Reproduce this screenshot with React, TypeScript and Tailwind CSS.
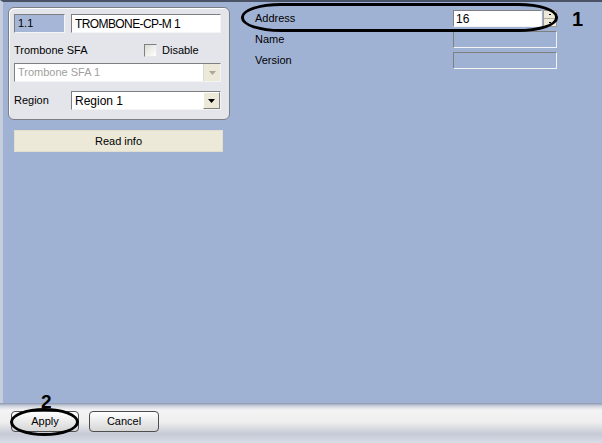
import React from 'react';

const font = { fontFamily: '"Liberation Sans", Arial, sans-serif' };

function Sunken({ className = '', children }: { className?: string; children?: React.ReactNode }) {
  return (
    <div
      className={`flex items-center border border-t-[#7f7f7f] border-l-[#7f7f7f] border-b-[#f4f4f4] border-r-[#f4f4f4] ${className}`}
    >
      {children}
    </div>
  );
}

function Arrow({ disabled }: { disabled?: boolean }) {
  return (
    <div className="flex h-full w-[17px] items-center justify-center border-l border-[#d8d8d8] bg-[#ece9d8]">
      <svg width="7" height="4" viewBox="0 0 7 4">
        <polygon points="0,0 7,0 3.5,4" fill={disabled ? '#aca899' : '#000'} />
      </svg>
    </div>
  );
}

function Ellipse({ className }: { className: string }) {
  return <div className={`pointer-events-none absolute border-[3px] border-black ${className}`} />;
}

function FieldRow({ label, children }: { label: string; children: React.ReactNode }) {
  return (
    <div className="flex h-[21px] items-center">
      <span className="w-[198px] text-[11px] text-black">{label}</span>
      {children}
    </div>
  );
}

export default function App() {
  return (
    <div className="relative flex h-[443px] w-[602px] flex-col overflow-hidden bg-[#a0b2d4]" style={font}>
      {/* Main area */}
      <div className="flex flex-1 border-t-2 border-l-[3px] border-t-[#4a5266] border-l-[#c6cedd] pt-[5px] pl-[5px]">
        {/* Left column */}
        <div className="flex w-[222px] flex-col">
          <div className="flex h-[113px] flex-col rounded-[6px] border border-[#7d7d84] bg-[#e4e5ea] pt-[6px] pl-[5px] shadow-[inset_1px_1px_0_#ffffff]">
            <div className="flex h-[19px] gap-[6px]">
              <Sunken className="w-[51px] bg-[#a6b6d6] pl-[3px] text-[11px] text-black">1.1</Sunken>
              <Sunken className="w-[150px] bg-white pl-[3px] text-[12px] tracking-[-0.6px] text-black">
                TROMBONE-CP-M 1
              </Sunken>
            </div>
            <div className="mt-[11px] flex h-[13px] items-center">
              <span className="w-[130px] text-[11px] text-black">Trombone SFA</span>
              <div className="h-[13px] w-[13px] border border-t-[#808080] border-l-[#808080] border-b-[#e8e8e8] border-r-[#e8e8e8] bg-gradient-to-br from-[#dcdcd6] to-white" />
              <span className="ml-[5px] text-[11px] text-black">Disable</span>
            </div>
            <Sunken className="mt-[6px] h-[19px] w-[207px] bg-white text-[11px] text-[#a0a0a0]">
              <span className="flex-1 pl-[3px]">Trombone SFA 1</span>
              <Arrow disabled />
            </Sunken>
            <div className="mt-[9px] flex h-[19px] items-center">
              <span className="w-[57px] text-[11px] text-black">Region</span>
              <Sunken className="h-[19px] w-[150px] bg-white text-[12px] text-black">
                <span className="flex-1 pl-[3px]">Region 1</span>
                <div className="flex h-full w-[17px] items-center justify-center border border-t-white border-l-white border-b-[#808080] border-r-[#808080] bg-[#ece9d8]">
                  <svg width="7" height="4" viewBox="0 0 7 4">
                    <polygon points="0,0 7,0 3.5,4" fill="#000" />
                  </svg>
                </div>
              </Sunken>
            </div>
          </div>
          <button className="mt-[10px] ml-[6px] h-[22px] w-[209px] border border-[#e2dfcf] bg-[#ece9d8] text-[11px] text-black">
            Read info
          </button>
        </div>

        {/* Right column */}
        <div className="ml-[25px] flex flex-col pt-[1px]">
          <FieldRow label="Address">
            <Sunken className="h-[17px] w-[89px] bg-white pl-[2px] text-[12px] text-black">16</Sunken>
            <div className="ml-[1px] flex h-[17px] w-[14px] flex-col border border-[#9a9a9a] bg-[#ece9d8]">
              <div className="flex flex-1 items-center justify-center border-b border-[#b0ad9e]">
                <div className="h-[1px] w-[2px] bg-black" />
              </div>
              <div className="flex flex-1 items-center justify-center">
                <div className="h-[1px] w-[2px] bg-black" />
              </div>
            </div>
          </FieldRow>
          <FieldRow label="Name">
            <Sunken className="h-[17px] w-[104px] border-b-[#e4e8f0] border-r-[#e4e8f0]" />
          </FieldRow>
          <FieldRow label="Version">
            <Sunken className="h-[17px] w-[104px] border-b-[#e4e8f0] border-r-[#e4e8f0]" />
          </FieldRow>
        </div>
      </div>

      {/* Bottom bar */}
      <div className="flex h-[40px] items-start gap-[10px] bg-[linear-gradient(to_bottom,#8a94ae_0px,#cfd4de_3px,#f3f3f3_7px,#efefef_19px,#c6cad6_31px,#d8dce6_40px)] pt-[8px] pl-[11px]">
        <button className="h-[21px] w-[68px] rounded-[4px] border border-[#4e4e4e] bg-gradient-to-b from-white to-[#d6d6d6] text-[11px] text-black">
          Apply
        </button>
        <button className="h-[21px] w-[70px] rounded-[4px] border border-[#4e4e4e] bg-gradient-to-b from-white to-[#d6d6d6] text-[11px] text-black">
          Cancel
        </button>
      </div>

      {/* Annotations */}
      <Ellipse className="top-[3px] left-[241px] h-[29px] w-[317px] rounded-[40px/14px]" />
      <span className="absolute top-[8px] left-[572px] text-[20px] leading-[22px] font-bold text-black">1</span>
      <Ellipse className="top-[408px] left-[10px] h-[28px] w-[69px] rounded-[50%]" />
      <span className="absolute top-[392px] left-[41px] text-[19px] leading-[20px] font-bold text-black">2</span>
    </div>
  );
}
